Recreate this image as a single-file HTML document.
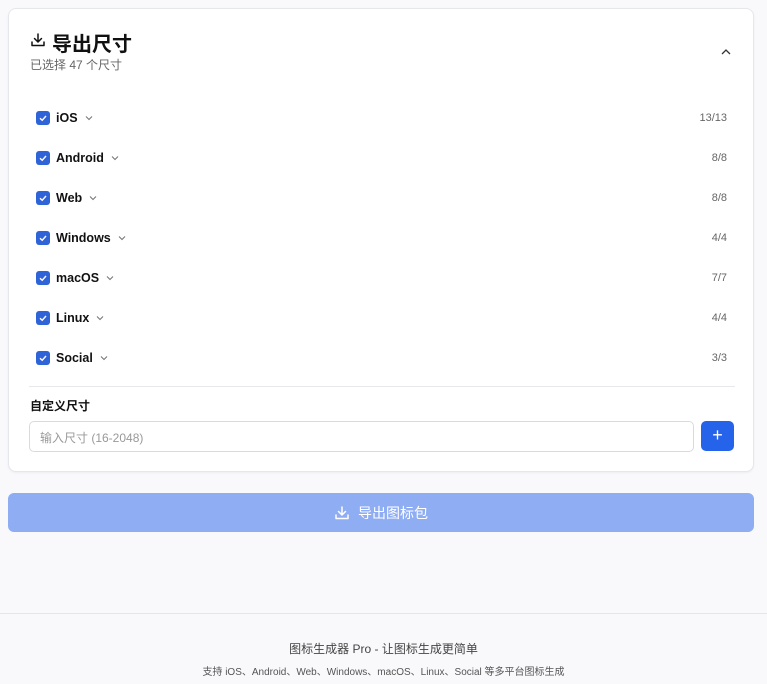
<!DOCTYPE html>
<html><head><meta charset="utf-8"><style>
*{box-sizing:border-box;margin:0;padding:0}
body{width:767px;height:684px;background:#f9f9fc;font-family:"Liberation Sans","Noto Sans CJK SC",sans-serif;position:relative;overflow:hidden;color:#111}
.card{position:absolute;left:8px;top:8px;width:746px;height:464px;background:#fff;border:1px solid #e6e7eb;border-radius:8px;box-shadow:0 1px 2px rgba(0,0,0,.05)}
.abs{position:absolute}
.row{position:absolute;left:28px;width:691px;height:20px;display:flex;align-items:center}
.cb{width:14px;height:14px;background:#2f63d8;border-radius:3px;display:flex;align-items:center;justify-content:center}
.lab{margin-left:6px;font-size:12.5px;font-weight:bold}
.chev{margin-left:6px}
.cnt{margin-left:auto;font-size:11px;color:#666}
</style></head><body>
<div class="card">
 <svg class="abs" style="left:21px;top:23px" width="16" height="16" viewBox="0 0 16 16" fill="none" stroke="#111" stroke-width="1.5" stroke-linecap="round" stroke-linejoin="round"><path d="M8 2v8M4.5 6.5 8 10l3.5-3.5M2 10v3.5h12V10"/></svg>
 <div class="abs" style="left:43px;top:19px;font-size:20px;font-weight:bold">导出尺寸</div>
 <div class="abs" style="left:21px;top:47px;font-size:12px;color:#666">已选择 47 个尺寸</div>
 <svg class="abs" style="left:711px;top:38px" width="12" height="10" viewBox="0 0 12 10" fill="none" stroke="#333" stroke-width="1.3"><path d="M2 7 6 3l4 4"/></svg>
 <div class="abs" style="left:20px;top:377px;width:706px;height:1px;background:#e8e8ec"></div>
 <div class="abs" style="left:21px;top:388px;font-size:12px;font-weight:bold">自定义尺寸</div>
 <div class="abs" style="left:20px;top:412px;width:665px;height:31px;border:1px solid #d8dade;border-radius:5px;font-size:12px;color:#999;padding:7px 10px">输入尺寸 (16-2048)</div>
 <div class="abs" style="left:692px;top:412px;width:33px;height:30px;background:#2563eb;border-radius:5px;color:#fff;font-size:18px;text-align:center;line-height:29px">+</div>
</div>
<div id="rows"></div>
<div class="abs" style="left:8px;top:493px;width:746px;height:39px;background:#8fadf3;border-radius:6px;display:flex;align-items:center;justify-content:center;color:#fff;font-size:14px">
 <svg width="16" height="16" viewBox="0 0 16 16" fill="none" stroke="#fff" stroke-width="1.5" stroke-linecap="round" stroke-linejoin="round" style="margin-right:8px"><path d="M8 2v8M4.5 6.5 8 10l3.5-3.5M2 10v3.5h12V10"/></svg>导出图标包</div>
<div class="abs" style="left:0;top:613px;width:767px;height:1px;background:#e6e6ea"></div>
<div class="abs" style="left:0;top:640px;width:767px;text-align:center;font-size:12px;color:#444">图标生成器 Pro - 让图标生成更简单</div>
<div class="abs" style="left:0;top:663px;width:767px;text-align:center;font-size:10px;color:#555">支持 iOS、Android、Web、Windows、macOS、Linux、Social 等多平台图标生成</div>
<script>
var d=[["iOS","13/13"],["Android","8/8"],["Web","8/8"],["Windows","4/4"],["macOS","7/7"],["Linux","4/4"],["Social","3/3"]],h="";
d.forEach(function(r,i){h+='<div class="row" style="left:36px;top:'+(108+i*40)+'px"><div class="cb"><svg width="10" height="10" viewBox="0 0 10 10" fill="none" stroke="#fff" stroke-width="1.4"><path d="M2 5.2 4.2 7.3 8 3"/></svg></div><span class="lab">'+r[0]+'</span><svg class="chev" width="10" height="8" viewBox="0 0 10 8" fill="none" stroke="#777" stroke-width="1.1"><path d="M2 2.5 5 5.5 8 2.5"/></svg><span class="cnt">'+r[1]+'</span></div>';});
document.getElementById("rows").innerHTML=h;
</script>
</body></html>
